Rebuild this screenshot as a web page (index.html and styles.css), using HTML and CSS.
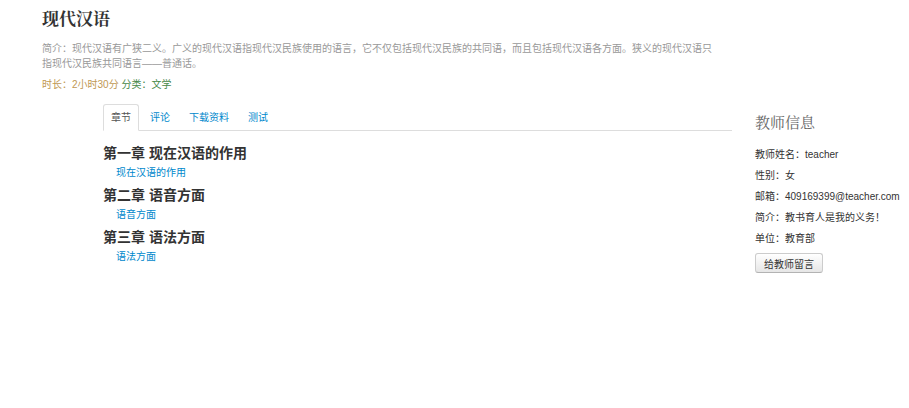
FILE: index.html
```html
<!DOCTYPE html>
<html lang="zh-CN">
<head>
    <meta charset="UTF-8">
    <title>现代汉语</title>
    <link rel="stylesheet" href="styles.css">
</head>
<body>
    <div class="course-header">
        <h1 class="course-title">现代汉语</h1>
        <p class="course-desc">简介：现代汉语有广狭二义。广义的现代汉语指现代汉民族使用的语言，它不仅包括现代汉民族的共同语，而且包括现代汉语各方面。狭义的现代汉语只指现代汉民族共同语言——普通话。</p>
        <p class="course-meta"><span class="duration">时长：2小时30分</span> <span class="category">分类：文学</span></p>
    </div>

    <div class="course-body">
        <div class="main-col">
            <ul class="tabs">
                <li class="active"><a href="#">章节</a></li>
                <li><a href="#">评论</a></li>
                <li><a href="#">下载资料</a></li>
                <li><a href="#">测试</a></li>
            </ul>
            <div class="chapters">
                <div class="chapter">
                    <h3>第一章 现在汉语的作用</h3>
                    <a href="#">现在汉语的作用</a>
                </div>
                <div class="chapter">
                    <h3>第二章 语音方面</h3>
                    <a href="#">语音方面</a>
                </div>
                <div class="chapter">
                    <h3>第三章 语法方面</h3>
                    <a href="#">语法方面</a>
                </div>
            </div>
        </div>

        <div class="sidebar">
            <h2>教师信息</h2>
            <p>教师姓名：teacher</p>
            <p>性别：女</p>
            <p>邮箱：409169399@teacher.com</p>
            <p>简介：教书育人是我的义务！</p>
            <p>单位：教育部</p>
            <button class="btn">给教师留言</button>
        </div>
    </div>
</body>
</html>
```

FILE: styles.css
```css
body, html {
    margin: 0;
    padding: 0;
    background: #fff;
    color: #333;
    font-family: "Liberation Sans", "Noto Sans CJK SC", sans-serif;
    font-size: 10px;
}

.course-header {
    padding: 9px 0 0 42px;
}
.course-title {
    margin: 0;
    font-family: "Liberation Serif", "Noto Serif CJK SC", "Noto Sans CJK SC", serif;
    font-size: 17px;
    font-weight: bold;
    line-height: 22px;
    color: #333;
}
.course-desc {
    width: 675px;
    margin: 10px 0 0;
    line-height: 15px;
    color: #999;
}
.course-meta {
    margin: 7px 0 0;
    line-height: 14px;
}
.duration {
    color: #c09853;
}
.category {
    color: #468847;
}

.course-body {
    display: flex;
    gap: 23px;
    padding: 12px 0 0 103px;
}
.main-col {
    width: 629px;
}

.tabs {
    list-style: none;
    margin: 0;
    padding: 0;
    display: flex;
    border-bottom: 1px solid #ddd;
}
.tabs li {
    margin-right: 3px;
    margin-bottom: -1px;
}
.tabs a {
    display: block;
    padding: 0 7px;
    line-height: 25px;
    color: #0088cc;
    text-decoration: none;
    border: 1px solid transparent;
    border-radius: 3px 3px 0 0;
}
.tabs li.active a {
    color: #555;
    background: #fff;
    border-color: #ddd #ddd transparent;
}

.chapters {
    padding-top: 12px;
}
.chapter h3 {
    margin: 0;
    font-size: 14px;
    font-weight: bold;
    line-height: 20px;
    color: #333;
}
.chapter a {
    display: block;
    padding-left: 13px;
    margin-bottom: 2px;
    line-height: 20px;
    color: #0088cc;
    text-decoration: none;
}

.sidebar {
    padding-top: 8px;
}
.sidebar h2 {
    margin: 0 0 10px;
    font-family: "Liberation Serif", "Noto Serif CJK SC", "Noto Sans CJK SC", serif;
    font-size: 15px;
    font-weight: normal;
    line-height: 22px;
    color: #666;
}
.sidebar p {
    margin: 0;
    line-height: 21px;
}
.btn {
    margin-top: 4px;
    padding: 0 8px;
    height: 20px;
    font-family: inherit;
    font-size: 10px;
    color: #333;
    background: linear-gradient(#fff, #e6e6e6);
    border: 1px solid #ccc;
    border-bottom-color: #b3b3b3;
    border-radius: 3px;
}
```
